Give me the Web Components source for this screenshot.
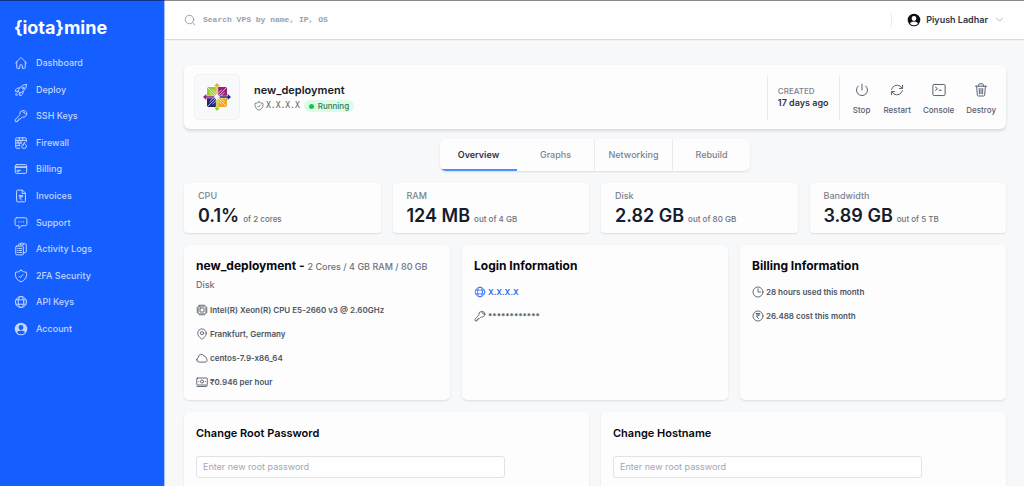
<!DOCTYPE html>
<html lang="en">
<head>
<meta charset="utf-8">
<title>iotamine - new_deployment</title>
<style>
  body {
    margin: 0;
    font-family: Inter, "Liberation Sans", sans-serif;
    font-size: 9px;
    line-height: 12px;
    font-weight: 500;
    color: #4b5563;
    background: #f7f8fa;
    --blue: #155eff;
    --card: #fdfdfd;
    --line: #e8eaee;
    --ink: #151c2b;
    --muted: #7b8290;
    --shadow: 0 1px 2px rgba(20, 30, 50, 0.12);
  }
</style>
</head>
<body>
<app-shell>
  <side-nav slot="nav"></side-nav>
  <top-bar user="Piyush Ladhar"></top-bar>
  <page-body>
    <server-header name="new_deployment" ip="X.X.X.X" status="Running" created="17 days ago">
      <action-button icon="power">Stop</action-button>
      <action-button icon="restart">Restart</action-button>
      <action-button icon="console">Console</action-button>
      <action-button icon="trash">Destroy</action-button>
    </server-header>
    <tab-bar tabs="Overview,Graphs,Networking,Rebuild" active="Overview"></tab-bar>
    <card-row>
      <stat-card label="CPU" value="0.1%">of 2 cores</stat-card>
      <stat-card label="RAM" value="124 MB">out of 4 GB</stat-card>
      <stat-card label="Disk" value="2.82 GB">out of 80 GB</stat-card>
      <stat-card label="Bandwidth" value="3.89 GB">out of 5 TB</stat-card>
    </card-row>
    <card-row>
      <info-card heading="new_deployment -" detail="2 Cores / 4 GB RAM / 80 GB Disk">
        <info-line icon="cpu">Intel(R) Xeon(R) CPU E5-2660 v3 @ 2.60GHz</info-line>
        <info-line icon="pin">Frankfurt, Germany</info-line>
        <info-line icon="cloud">centos-7.9-x86_64</info-line>
        <info-line icon="cash">₹0.946 per hour</info-line>
      </info-card>
      <info-card heading="Login Information">
        <info-line icon="globe" accent>X.X.X.X</info-line>
        <info-line icon="key">************</info-line>
      </info-card>
      <info-card heading="Billing Information">
        <info-line icon="clock">28 hours used this month</info-line>
        <info-line icon="rupee">26.488 cost this month</info-line>
      </info-card>
    </card-row>
    <card-row>
      <form-card heading="Change Root Password" placeholder="Enter new root password" type="password"></form-card>
      <form-card heading="Change Hostname" placeholder="Enter new root password" type="text"></form-card>
    </card-row>
  </page-body>
</app-shell>

<script>
const ICONS = {
  home: '<path d="M2.5 12 11.2 3.3a1.1 1.1 0 0 1 1.6 0L21.500 12M4.700 9.800v10.300c0 .6.5 1.100 1.100 1.100h3.900v-5c0-.6.5-1.100 1.100-1.100h2.400c.6 0 1.100.5 1.100 1.100v5h3.900c.6 0 1.100-.5 1.100-1.100V9.800"/>',
  rocket: '<path d="M15.600 14.400a6 6 0 0 1-5.800 7.400v-4.800m5.800-2.600a15 15 0 0 0 6.100-12.100A15 15 0 0 0 9.600 8.400m6 6a15 15 0 0 1-5.800 2.600M9.600 8.400a6 6 0 0 0-7.400 5.800H7m2.600-5.800A15 15 0 0 0 7 14.200m2.800 2.800L7 14.200M4.800 16.600a4.500 4.500 0 0 0-1.700 4.300 4.500 4.500 0 0 0 4.300-1.700"/><circle cx="15.500" cy="8.700" r="1.700"/>',
  key: '<path d="M15.800 5.200a3 3 0 0 1 3 3m3 0a6 6 0 0 1-7 5.900c-.6-.1-1.200 0-1.600.4L10.500 17.200H8.200v2.300H6v2.200H2.200v-2.800c0-.6.2-1.200.7-1.600l6.500-6.500c.4-.4.5-1 .4-1.600a6 6 0 1 1 12-1z"/>',
  firewall: '<path d="M21 10V4.500C21 3.700 20.300 3 19.500 3h-15C3.700 3 3 3.700 3 4.500v15c0 .8.7 1.500 1.500 1.500H10M3 7.500h18M3 12h10M3 16.500h7M9 3v4.500M15 3v4.500M12 7.500V12M7 7.500V12M9 12v4.500"/><path d="M17.500 11.500c.3 2 3.800 3.200 3.800 6a4 4 0 0 1-8 0c0-1.400.7-2.500 1.700-3.200.2 1 .8 1.500 1.500 1.600-.3-1.500 0-3.300 1-4.400z"/>',
  card: '<path d="M2.200 8.200h19.500M2.200 9.300h19.500M5.200 14.200h6m-6 2.300h3"/><rect x="2.200" y="4.500" width="19.500" height="15" rx="2.200"/>',
  invoice: '<path d="M14 2H6c-.9 0-1.600.7-1.600 1.600v16.800c0 .9.7 1.600 1.600 1.600h12c.9 0 1.600-.7 1.600-1.600V7.600zM14 2v5.600h5.600M9 11h6M9 13.300h6M9.500 11c4.500 0 4.500 4.600 0 4.600l3.500 3"/>',
  chat: '<path d="M8 10h.1M12 10h.1M16 10h.1" stroke-width="2.200"/><path d="M4.200 3h15.600c1.300 0 2.300 1 2.300 2.300v9c0 1.300-1 2.300-2.300 2.300h-7L8.500 21.500v-4.900H4.200c-1.300 0-2.300-1-2.300-2.300v-9C1.900 4 2.900 3 4.200 3z"/>',
  logs: '<path d="M8 6.500V4.300C8 3.600 8.600 3 9.300 3H11c.4-1 1.300-1.500 2.500-1.500S15.600 2 16 3h3.500c.8 0 1.500.7 1.500 1.500v12.300c0 .8-.7 1.500-1.500 1.500H16M11 3v2h5V3"/><rect x="3" y="7" width="13" height="15" rx="1.500"/><path d="M6 11h1m2 0h4M6 14.500h1m2 0h4M6 18h1m2 0h4"/>',
  shield: '<path d="m8.600 12.400 2.400 2.400 4.200-5.200M12 2c2.400 2.300 5.500 3.400 9.200 3.400.3 1 .5 2.200.5 3.500 0 6.300-3.800 11.200-9.700 13.100C6.100 20.100 2.300 15.200 2.300 8.900c0-1.300.2-2.500.5-3.500C6.500 5.400 9.600 4.300 12 2z"/>',
  globe: '<circle cx="12" cy="12" r="9.500"/><ellipse cx="12" cy="12" rx="4.800" ry="9.500"/><path d="M3.500 8.200h17M3.500 15.800h17"/>',
  user: '<path fill="currentColor" stroke="none" fill-rule="evenodd" d="M12 1.200a10.800 10.800 0 1 0 0 21.600 10.800 10.800 0 0 0 0-21.600zM12 5.300a4.100 4.100 0 1 1 0 8.200 4.100 4.100 0 0 1 0-8.200zM5.200 17.800c1.500-2 4-3.200 6.800-3.200s5.300 1.200 6.800 3.200A8.800 8.800 0 0 1 12 21a8.800 8.800 0 0 1-6.800-3.200z"/>',
  search: '<circle cx="11" cy="11" r="8.500"/><path d="m22 22-5-5"/>',
  chevron: '<path d="m4 8.500 8 8 8-8"/>',
  power: '<path d="M5.300 5.300a9.500 9.500 0 1 0 13.400 0M12 2v10"/>',
  restart: '<path d="M16 9.300h5.500V4M21 9.200A9.700 9.700 0 0 0 3.800 8.700L2.800 11M8 14.700H2.500V20M3 14.800a9.700 9.700 0 0 0 17.200.5l1-2.300"/>',
  console: '<rect x="1.500" y="2.500" width="21" height="19" rx="2.200"/><path d="m6 7 3.500 2.700L6 12.500M12 12.500h4"/>',
  trash: '<path d="M2.500 5.500h19M8 5.500V3c0-.9.800-1.700 1.700-1.700h4.600c.9 0 1.700.8 1.700 1.700v2.500M4.500 5.500l1.200 15c.1 1 .8 1.800 1.800 1.800h9c1 0 1.700-.8 1.800-1.800l1.200-15M9 9.500l.3 9M15 9.500l-.3 9M12 9.500v9"/>',
  cpu: '<rect x="4" y="4" width="16" height="16" rx="2.200"/><rect x="8" y="8" width="8" height="8" rx=".5"/><path d="M8 1.800v2M12 1.800v2M16 1.800v2M8 20.200v2M12 20.200v2M16 20.200v2M1.800 8h2M1.800 12h2M1.800 16h2M20.200 8h2M20.200 12h2M20.200 16h2"/>',
  pin: '<circle cx="12" cy="10.300" r="3.200"/><path d="M20.500 10.300C20.500 17.500 12 22.500 12 22.500s-8.500-5-8.500-12.200a8.500 8.500 0 1 1 17 0z"/>',
  cloud: '<path d="M1.500 15.500A4.700 4.700 0 0 0 6.200 20.200H18.500a4 4 0 0 0 1.300-7.700 3.200 3.200 0 0 0-3.900-4.200A5.700 5.700 0 0 0 4.900 11a4.700 4.700 0 0 0-3.400 4.500z"/>',
  cash: '<rect x="1.500" y="4" width="21" height="14" rx="1.300"/><circle cx="12" cy="11" r="3"/><path d="M5.500 11h.1M18.500 11h.1M2 21h18.500c1.200 0 2-.6 2-2"/>',
  clock: '<circle cx="12" cy="12" r="10"/><path d="M12 5.500V12h5.500"/>',
  rupee: '<circle cx="12" cy="12" r="10"/><path d="M8.500 7h7M8.500 10h7M9 7c5.500 0 5.500 6 0 6l4.500 4.500"/>'
};

class AppIcon extends HTMLElement {
  connectedCallback() {
    const root = this.attachShadow({ mode: "open" });
    root.innerHTML = `
      <style>
        :host { display: block; flex: none; width: var(--size, 14px); height: var(--size, 14px); }
        svg { display: block; width: 100%; height: 100%; }
      </style>
      <svg viewBox="0 0 24 24" fill="none" stroke="currentColor" stroke-width="1.7"
        stroke-linecap="round" stroke-linejoin="round" aria-hidden="true">${ICONS[this.getAttribute("name")]}</svg>
    `;
  }
}

class AppShell extends HTMLElement {
  connectedCallback() {
    this.attachShadow({ mode: "open" }).innerHTML = `
      <style>
        :host { display: flex; min-height: 100vh; box-sizing: border-box; }
        .strip { position: absolute; top: 0; left: 0; right: 0; height: 1px; background: rgba(0, 0, 0, 0.45); }
        main { flex: 1; min-width: 0; }
      </style>
      <slot name="nav"></slot>
      <main><slot></slot></main>
      <div class="strip"></div>
    `;
  }
}

class SideNav extends HTMLElement {
  connectedCallback() {
    const links = [
      ["home", "Dashboard"], ["rocket", "Deploy"], ["key", "SSH Keys"], ["firewall", "Firewall"],
      ["card", "Billing"], ["invoice", "Invoices"], ["chat", "Support"], ["logs", "Activity Logs"],
      ["shield", "2FA Security"], ["globe", "API Keys"], ["user", "Account"]
    ];
    this.attachShadow({ mode: "open" }).innerHTML = `
      <style>
        :host {
          display: block;
          flex: none;
          width: 165px;
          box-sizing: border-box;
          padding: 18px 14px;
          background: var(--blue);
          border-right: 1px solid #a9c3fb;
        }
        a { color: #c3d6ff; text-decoration: none; }
        .brand { display: block; font-size: 18px; line-height: 20px; font-weight: 700; color: #fff; }
        nav {
          display: flex;
          flex-direction: column;
          justify-content: space-between;
          height: 280px;
          margin-top: 18px;
        }
        nav a { display: flex; align-items: center; gap: 8px; height: 14px; }
      </style>
      <a class="brand" href="#">{iota}mine</a>
      <nav>
        ${links.map(([icon, text]) => `<a href="#"><app-icon name="${icon}"></app-icon>${text}</a>`).join("")}
      </nav>
    `;
  }
}

class TopBar extends HTMLElement {
  connectedCallback() {
    this.attachShadow({ mode: "open" }).innerHTML = `
      <style>
        :host {
          display: flex;
          align-items: center;
          box-sizing: border-box;
          height: 39px;
          padding: 0 20px 0 19px;
          background: #fefefe;
          box-shadow: 0 1px 1px rgba(20, 30, 50, 0.14);
        }
        label { --size: 12px; display: flex; flex: 1; align-items: center; gap: 7px; color: #8b95a5; }
        input {
          flex: 1;
          padding: 0;
          border: 0;
          outline: 0;
          background: none;
          font: 700 8px/12px "Liberation Mono", monospace;
        }
        input::placeholder { color: #97a1b0; opacity: 1; }
        button {
          --size: 14px;
          display: flex;
          align-items: center;
          gap: 5px;
          height: 14px;
          padding: 0 0 0 15px;
          border: 0;
          border-left: 1px solid var(--line);
          background: none;
          font: inherit;
          font-weight: 600;
          color: #2c3444;
        }
        .face { color: #0b0e14; }
        .arrow { --size: 9px; margin-left: 2px; color: #8b95a5; }
      </style>
      <label><app-icon name="search"></app-icon><input type="search" aria-label="Search" placeholder="Search VPS by name, IP, OS"></label>
      <button type="button">
        <app-icon class="face" name="user"></app-icon>${this.getAttribute("user")}<app-icon class="arrow" name="chevron"></app-icon>
      </button>
    `;
  }
}

class PageBody extends HTMLElement {
  connectedCallback() {
    this.attachShadow({ mode: "open" }).innerHTML = `
      <style>
        :host { display: flex; flex-direction: column; gap: 12px; padding: 26px 18px 8px 19px; }
      </style>
      <slot></slot>
    `;
  }
}

class CardRow extends HTMLElement {
  connectedCallback() {
    this.attachShadow({ mode: "open" }).innerHTML = `
      <style>
        :host { display: flex; gap: 12px; }
        ::slotted(*) { flex: 1 1 0; min-width: 0; }
      </style>
      <slot></slot>
    `;
  }
}

class ServerHeader extends HTMLElement {
  connectedCallback() {
    this.attachShadow({ mode: "open" }).innerHTML = `
      <style>
        :host {
          display: flex;
          align-items: center;
          box-sizing: border-box;
          padding: 9px 10px;
          margin-bottom: -2px;
          border-radius: 6px;
          background: var(--card);
          box-shadow: 0 2px 3px rgba(20, 30, 50, 0.14);
        }
        .logo {
          display: flex;
          padding: 8px;
          border: 1px solid #eff1f4;
          border-radius: 5px;
          background: #f8f9fb;
        }
        .logo svg { width: 28px; height: 28px; }
        .title { flex: 1; margin-left: 14px; }
        h1 { margin: 0 0 2px; font-size: 11px; line-height: 16px; font-weight: 600; color: var(--ink); }
        .meta { --size: 10px; display: flex; align-items: center; gap: 2px; }
        .ip { font: 8px/12px "DejaVu Sans Mono", monospace; }
        .status {
          display: flex;
          align-items: center;
          gap: 4px;
          margin-left: 2px;
          padding: 0 5px;
          border-radius: 6px;
          background: #dcfce7;
          font-size: 8px;
          color: #2f7a50;
        }
        .status::before { content: ""; width: 5px; height: 5px; border-radius: 50%; background: #12c653; }
        .created { padding: 11px 10px; border: solid var(--line); border-width: 0 1px; }
        .created small { display: block; font-size: 8px; line-height: 11px; color: var(--muted); }
        .created b { display: block; font-weight: 600; color: #2c3444; }
        .actions { display: flex; gap: 12px; margin-left: 12px; padding-top: 4px; }
      </style>
      <div class="logo">
        <svg viewBox="0 0 84 84" aria-label="CentOS">
          <path fill="#9ccd2a" d="M12 12h29v29H12z"/>
          <path fill="#932279" d="M43 12h29v29H43z"/>
          <path fill="#262577" d="M12 43h29v29H12z"/>
          <path fill="#efa724" d="M43 43h29v29H43z"/>
          <path stroke="#fff" stroke-width="2" fill="none" d="M12 12l60 60M72 12L12 72M20 28l13 13M28 20l13 13M56 20 43 33M64 28 51 41M20 56l13-13M28 64l13-13M64 56 51 43M56 64 43 51"/>
          <path stroke="#f8f9fb" stroke-width="7" d="M42 10v64M10 42h64"/>
          <path fill="#efa724" d="M42 0l9 10h-7v24h-4V10h-7z"/>
          <path fill="#262577" d="M84 42l-10 9v-7H50v-4h24v-7z"/>
          <path fill="#9ccd2a" d="M42 84l-9-10h7V50h4v24h7z"/>
          <path fill="#932279" d="M0 42l10-9v7h24v4H10v7z"/>
        </svg>
      </div>
      <div class="title">
        <h1>${this.getAttribute("name")}</h1>
        <div class="meta">
          <app-icon name="shield"></app-icon>
          <span class="ip">${this.getAttribute("ip")}</span>
          <span class="status">${this.getAttribute("status")}</span>
        </div>
      </div>
      <div class="created"><small>CREATED</small><b>${this.getAttribute("created")}</b></div>
      <div class="actions"><slot></slot></div>
    `;
  }
}

class ActionButton extends HTMLElement {
  connectedCallback() {
    this.attachShadow({ mode: "open" }).innerHTML = `
      <style>
        :host { display: block; }
        button {
          display: flex;
          flex-direction: column;
          align-items: center;
          gap: 7px;
          min-width: 20px;
          padding: 0;
          border: 0;
          background: none;
          font: inherit;
          font-size: 8px;
          color: #566070;
        }
      </style>
      <button type="button"><app-icon name="${this.getAttribute("icon")}"></app-icon><span><slot></slot></span></button>
    `;
  }
}

class TabBar extends HTMLElement {
  connectedCallback() {
    const active = this.getAttribute("active");
    const tabs = this.getAttribute("tabs").split(",");
    this.attachShadow({ mode: "open" }).innerHTML = `
      <style>
        :host {
          display: flex;
          align-self: center;
          width: 310px;
          border-radius: 6px;
          overflow: hidden;
          background: var(--card);
          box-shadow: var(--shadow);
        }
        button {
          flex: 1;
          box-sizing: border-box;
          padding: 10px 0 8px;
          border: 0;
          border-right: 1px solid var(--line);
          border-bottom: 2px solid transparent;
          background: none;
          font: inherit;
          color: var(--muted);
        }
        button:last-child { border-right: 0; }
        button[aria-selected="true"] {
          border-right: 0;
          border-bottom-color: #4d90fa;
          font-weight: 600;
          color: #2c3444;
        }
      </style>
      ${tabs.map((tab) => `<button type="button" role="tab" aria-selected="${tab === active}">${tab}</button>`).join("")}
    `;
    this.setAttribute("role", "tablist");
  }
}

class StatCard extends HTMLElement {
  connectedCallback() {
    this.attachShadow({ mode: "open" }).innerHTML = `
      <style>
        :host {
          display: block;
          box-sizing: border-box;
          padding: 7px 14px 5px;
          border-radius: 4px;
          background: var(--card);
          box-shadow: var(--shadow);
        }
        .label { margin-bottom: 2px; color: var(--muted); }
        .value { display: flex; align-items: baseline; gap: 4px; font-size: 8px; color: #6b7280; }
        b { font-size: 18px; line-height: 24px; font-weight: 600; color: var(--ink); }
      </style>
      <div class="label">${this.getAttribute("label")}</div>
      <div class="value"><b>${this.getAttribute("value")}</b><span><slot></slot></span></div>
    `;
  }
}

class InfoCard extends HTMLElement {
  connectedCallback() {
    const detail = this.getAttribute("detail");
    this.attachShadow({ mode: "open" }).innerHTML = `
      <style>
        :host {
          display: block;
          box-sizing: border-box;
          padding: 12px;
          border-radius: 5px;
          background: var(--card);
          box-shadow: var(--shadow);
        }
        h2 { margin: 0 0 11px; font-size: 12px; line-height: 18px; font-weight: 700; color: #06080d; }
        small { font-size: 9px; line-height: 12px; font-weight: 500; color: #6b7280; }
        .lines { display: flex; flex-direction: column; gap: 12px; }
      </style>
      <h2>${this.getAttribute("heading")}${detail ? ` <small>${detail}</small>` : ""}</h2>
      <div class="lines"><slot></slot></div>
    `;
  }
}

class InfoLine extends HTMLElement {
  connectedCallback() {
    this.attachShadow({ mode: "open" }).innerHTML = `
      <style>
        :host { --size: 12px; display: flex; align-items: center; gap: 2px; font-size: 8px; font-weight: 600; }
        :host([accent]) { color: #2f6df6; }
      </style>
      <app-icon name="${this.getAttribute("icon")}"></app-icon><span><slot></slot></span>
    `;
  }
}

class FormCard extends HTMLElement {
  connectedCallback() {
    this.attachShadow({ mode: "open" }).innerHTML = `
      <style>
        :host {
          display: block;
          box-sizing: border-box;
          padding: 12px;
          border-radius: 5px;
          background: var(--card);
          box-shadow: var(--shadow);
        }
        label { display: block; margin-bottom: 14px; font-size: 11px; line-height: 18px; font-weight: 600; color: #06080d; }
        input {
          display: block;
          box-sizing: border-box;
          width: 81%;
          padding: 4px 6px;
          border: 1px solid #dfe2e7;
          border-radius: 3px;
          background: #fefefe;
          font: 400 9px/12px Inter, sans-serif;
        }
        input::placeholder { color: #a0a8b5; opacity: 1; }
      </style>
      <label for="field">${this.getAttribute("heading")}</label>
      <input id="field" type="${this.getAttribute("type")}" placeholder="${this.getAttribute("placeholder")}">
    `;
  }
}

customElements.define("app-icon", AppIcon);
customElements.define("app-shell", AppShell);
customElements.define("side-nav", SideNav);
customElements.define("top-bar", TopBar);
customElements.define("page-body", PageBody);
customElements.define("card-row", CardRow);
customElements.define("server-header", ServerHeader);
customElements.define("action-button", ActionButton);
customElements.define("tab-bar", TabBar);
customElements.define("stat-card", StatCard);
customElements.define("info-card", InfoCard);
customElements.define("info-line", InfoLine);
customElements.define("form-card", FormCard);
</script>
</body>
</html>
